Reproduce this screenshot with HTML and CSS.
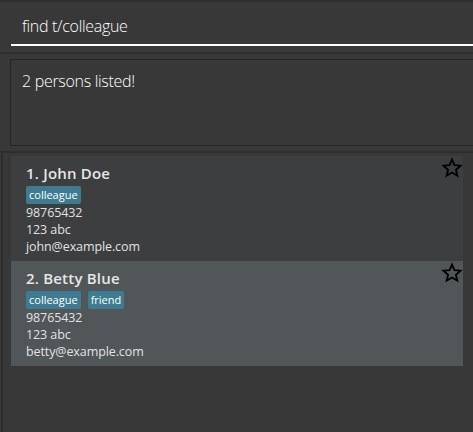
FILE: index.html
```html
<!DOCTYPE html>
<html>
<head>
<meta charset="utf-8">
<link rel="stylesheet" href="styles.css">
</head>
<body>
<div class="app">
  <section class="command">
    <div class="input">find t/colleague</div>
  </section>
  <section class="result">
    <div class="result-box">2 persons listed!</div>
  </section>
  <section class="list-panel">
    <div class="list">
      <div class="card odd">
        <div class="info">
          <div class="name">1. John Doe</div>
          <div class="tags"><span class="tag">colleague</span></div>
          <div class="line">98765432</div>
          <div class="line">123 abc</div>
          <div class="line">john@example.com</div>
        </div>
        <svg class="star" viewBox="0 0 24 24" width="22" height="22"><path d="M12 2.8l2.7 6.1 6.6.6-5 4.4 1.5 6.5L12 17l-5.8 3.4 1.5-6.5-5-4.4 6.6-.6z" fill="none" stroke="#000" stroke-width="2" stroke-linejoin="miter"/></svg>
      </div>
      <div class="card even">
        <div class="info">
          <div class="name">2. Betty Blue</div>
          <div class="tags"><span class="tag">colleague</span><span class="tag">friend</span></div>
          <div class="line">98765432</div>
          <div class="line">123 abc</div>
          <div class="line">betty@example.com</div>
        </div>
        <svg class="star" viewBox="0 0 24 24" width="22" height="22"><path d="M12 2.8l2.7 6.1 6.6.6-5 4.4 1.5 6.5L12 17l-5.8 3.4 1.5-6.5-5-4.4 6.6-.6z" fill="none" stroke="#000" stroke-width="2" stroke-linejoin="miter"/></svg>
      </div>
    </div>
  </section>
</div>
</body>
</html>
```
FILE: styles.css
```css
html, body {
  margin: 0;
  padding: 0;
  background: #383838;
  font-family: "Open Sans", "Noto Sans", sans-serif;
  color: #ffffff;
}
.app {
  width: 473px;
  height: 432px;
  display: flex;
  flex-direction: column;
  overflow: hidden;
}
.command {
  border-top: 2px solid #2e2e2e;
  box-sizing: border-box;
  padding: 0 0 0 11px;
  border-bottom: 2px solid #2e2e2e;
  height: 54px;
}
.input {
  height: 44px;
  box-sizing: border-box;
  padding: 14px 0 0 11px;
  font-size: 16px;
  font-weight: 300;
  letter-spacing: -0.3px;
  line-height: 20px;
  border-bottom: 2px solid #ffffff;
  color: #ffffff;
}
.result {
  padding: 5px 0 5px 10px;
  border-bottom: 2px solid #2e2e2e;
}
.result-box {
  height: 87px;
  box-sizing: border-box;
  border: 1px solid #262626;
  border-right: none;
  padding: 11px 0 0 11px;
  font-size: 16px;
  font-weight: 300;
  letter-spacing: -0.3px;
  line-height: 20px;
}
.list-panel {
  flex: 1;
  border-left: 2px solid #2e2e2e;
  margin-left: 1px;
  padding: 3px 10px 0 8px;
}
.card {
  display: flex;
  justify-content: space-between;
  height: 105px;
  box-sizing: border-box;
  padding: 5px 0 0 15px;
}
.odd { background: #3c3e3f; }
.even { background: #515658; }
.info {
  display: flex;
  flex-direction: column;
}
.name {
  font-size: 15px;
  font-weight: 600;
  letter-spacing: 0.2px;
  line-height: 24px;
  color: #e6e6e6;
}
.tags {
  display: flex;
  gap: 7px;
  margin-top: 1px;
}
.tag {
  background: #3e7b91;
  color: #ffffff;
  font-size: 11px;
  line-height: 18px;
  height: 18px;
  padding: 0 3px;
  border-radius: 2px;
}
.line {
  font-size: 12.5px;
  font-weight: 400;
  letter-spacing: -0.1px;
  line-height: 17px;
  color: #e2e2e2;
}
.star {
  margin-top: -4px;
  margin-right: 0;
  flex: none;
}
```
